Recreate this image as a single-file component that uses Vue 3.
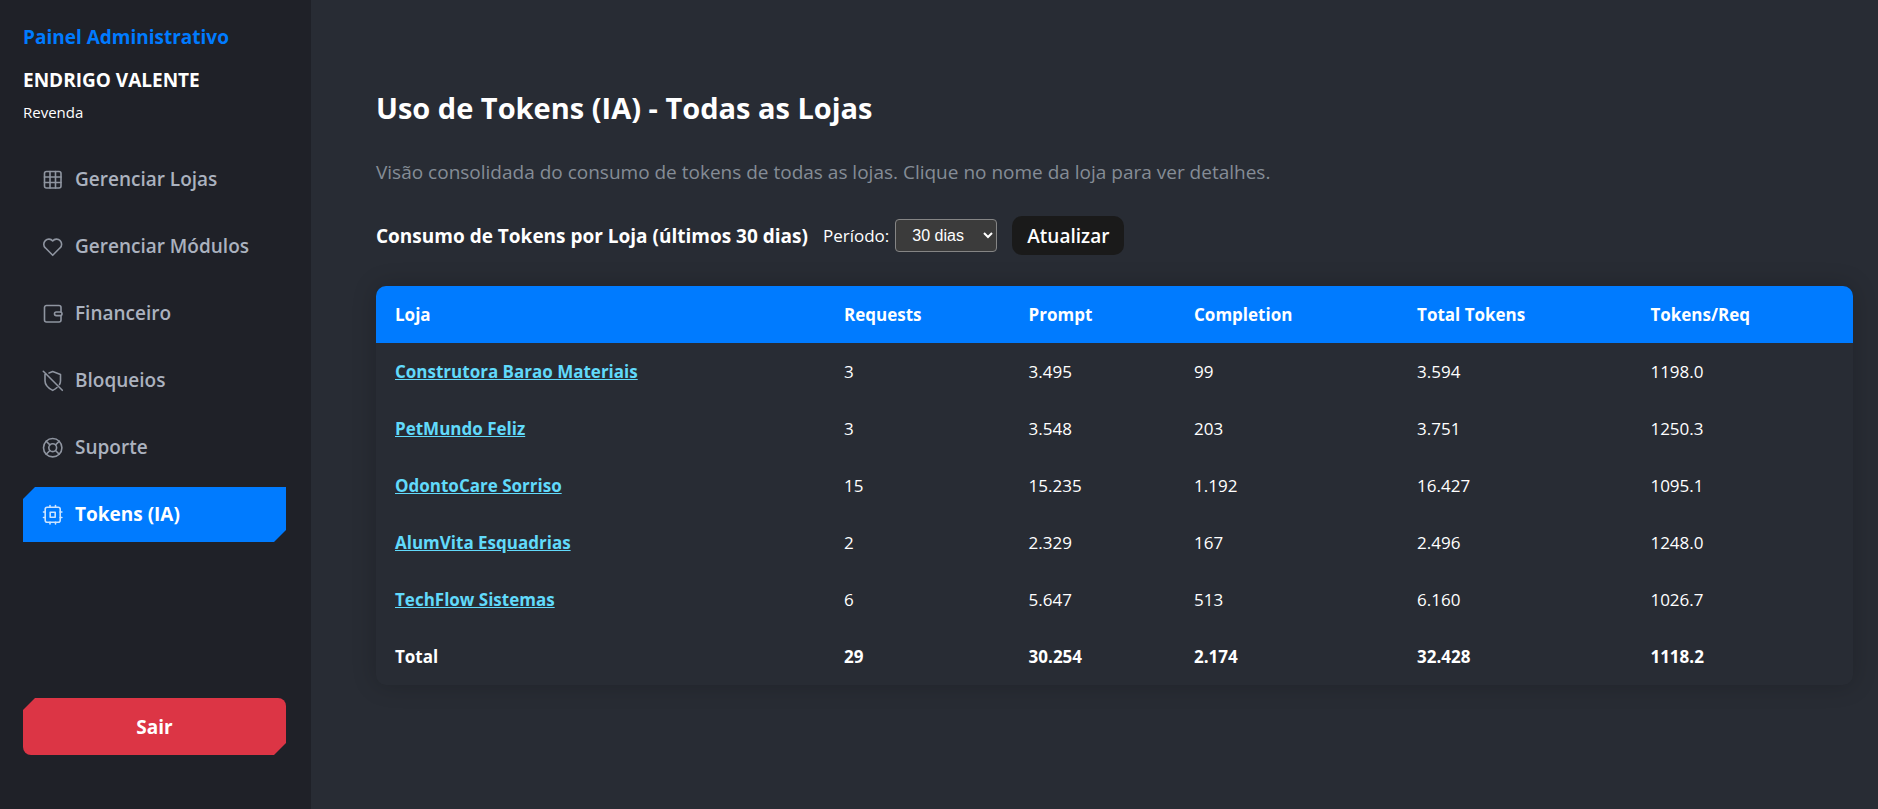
<script setup>
import { ref } from 'vue'

const period = ref('30')

const menu = [
  { label: 'Gerenciar Lojas', icon: 'grid' },
  { label: 'Gerenciar Módulos', icon: 'heart' },
  { label: 'Financeiro', icon: 'wallet' },
  { label: 'Bloqueios', icon: 'shield' },
  { label: 'Suporte', icon: 'buoy' },
  { label: 'Tokens (IA)', icon: 'chip', active: true }
]

const columns = ['Loja', 'Requests', 'Prompt', 'Completion', 'Total Tokens', 'Tokens/Req']

const stores = [
  { name: 'Construtora Barao Materiais', values: ['3', '3.495', '99', '3.594', '1198.0'] },
  { name: 'PetMundo Feliz', values: ['3', '3.548', '203', '3.751', '1250.3'] },
  { name: 'OdontoCare Sorriso', values: ['15', '15.235', '1.192', '16.427', '1095.1'] },
  { name: 'AlumVita Esquadrias', values: ['2', '2.329', '167', '2.496', '1248.0'] },
  { name: 'TechFlow Sistemas', values: ['6', '5.647', '513', '6.160', '1026.7'] }
]

const totals = ['29', '30.254', '2.174', '32.428', '1118.2']
</script>

<template>
  <div class="layout">
    <aside class="sidebar">
      <h2 class="brand">Painel Administrativo</h2>
      <div class="user">ENDRIGO VALENTE</div>
      <div class="role">Revenda</div>

      <nav class="menu">
        <a
          v-for="item in menu"
          :key="item.label"
          href="#"
          class="menu-item"
          :class="{ active: item.active }"
        >
          <svg class="icon" viewBox="0 0 24 24" aria-hidden="true">
            <template v-if="item.icon === 'grid'">
              <rect x="3.5" y="3.5" width="16.5" height="16.5" rx="2" />
              <path d="M3.5 9h16.5M3.5 14.5h16.5M9 3.5v16.5M14.5 3.5v16.5" />
            </template>
            <path
              v-else-if="item.icon === 'heart'"
              d="M11.7 20.3l-7.4-7.5a5 5 0 0 1 0-7.2a5 5 0 0 1 7.4.4a5 5 0 0 1 7.4-.4a5 5 0 0 1 0 7.2z"
            />
            <template v-else-if="item.icon === 'wallet'">
              <path d="M20 10V5.5a2 2 0 0 0-2-2H5.500a2 2 0 0 0-2 2V18a2 2 0 0 0 2 2H18a2 2 0 0 0 2-2v-4" />
              <rect x="13.500" y="10" width="7.500" height="3.600" rx="1.800" />
            </template>
            <template v-else-if="item.icon === 'shield'">
              <path d="M8 3.900l3.700-1.300l7.800 2.900v6.300c0 1.500-.4 2.700-1 3.700M16 18.500c-1.300 1.200-2.800 2.100-4.300 2.900c-4-2-7.700-5-7.700-9.600V5.500l.900-.3" />
              <path d="M2.300 2.300l19 19" />
            </template>
            <template v-else-if="item.icon === 'buoy'">
              <circle cx="11.700" cy="11.700" r="9.200" />
              <circle cx="11.700" cy="11.700" r="3.900" />
              <path d="M5.200 5.200l3.700 3.700M14.500 14.500l3.700 3.700M18.200 5.200l-3.700 3.700M8.900 14.500l-3.700 3.700" />
            </template>
            <template v-else>
              <rect x="4.200" y="4.200" width="15" height="15" rx="2" />
              <rect x="9.200" y="9.200" width="5" height="5" />
              <path d="M9 2.500v1.700M14.500 2.500v1.700M9 19.200v1.700M14.500 19.200v1.700M2.500 9h1.700M2.500 14.500h1.700M19.200 9h1.700M19.200 14.500h1.700" />
            </template>
          </svg>
          <span>{{ item.label }}</span>
        </a>
      </nav>

      <button type="button" class="logout">Sair</button>
    </aside>

    <main class="content">
      <h1 class="title">Uso de Tokens (IA) - Todas as Lojas</h1>
      <p class="subtitle">
        Visão consolidada do consumo de tokens de todas as lojas. Clique no nome da loja para ver detalhes.
      </p>

      <div class="toolbar">
        <h3 class="section">Consumo de Tokens por Loja (últimos 30 dias)</h3>
        <div class="period">
          <label for="period">Período:</label>
          <select id="period" v-model="period">
            <option value="7">7 dias</option>
            <option value="30">30 dias</option>
            <option value="90">90 dias</option>
          </select>
        </div>
        <button type="button" class="refresh">Atualizar</button>
      </div>

      <table class="usage">
        <colgroup>
          <col class="col-store" />
          <col class="col-requests" />
          <col class="col-prompt" />
          <col class="col-completion" />
          <col class="col-total" />
          <col class="col-ratio" />
        </colgroup>
        <thead>
          <tr>
            <th v-for="column in columns" :key="column" scope="col">{{ column }}</th>
          </tr>
        </thead>
        <tbody>
          <tr v-for="store in stores" :key="store.name">
            <td><a href="#" class="store">{{ store.name }}</a></td>
            <td v-for="(value, i) in store.values" :key="i">{{ value }}</td>
          </tr>
        </tbody>
        <tfoot>
          <tr>
            <td>Total</td>
            <td v-for="(value, i) in totals" :key="i">{{ value }}</td>
          </tr>
        </tfoot>
      </table>
    </main>
  </div>
</template>

<style>
body {
  margin: 0;
  background: #282c34;
}
</style>

<style scoped>
.layout {
  display: flex;
  min-height: 100vh;
  background: #282c34;
  color: #fff;
  font-family: "Segoe UI", "Open Sans", "Noto Sans", sans-serif;
  font-size: 17px;
  line-height: 23px;
}

.layout * {
  box-sizing: border-box;
}

.sidebar {
  display: flex;
  flex-direction: column;
  flex: 0 0 311px;
  padding: 24px 25px 54px 23px;
  background: #1f2128;
}

.brand,
.user {
  margin: 0 0 17px;
  font-size: 19px;
  font-weight: 700;
  line-height: 26px;
}

.brand {
  color: #007bff;
}

.user {
  margin-bottom: 9px;
}

.role {
  margin-bottom: 30px;
  font-size: 15px;
  line-height: 20px;
}

.menu {
  display: flex;
  flex-direction: column;
  gap: 12px;
}

.menu-item {
  display: flex;
  align-items: center;
  gap: 10px;
  height: 55px;
  padding: 0 18px;
  color: #abb2bf;
  font-size: 19px;
  font-weight: 600;
  text-decoration: none;
}

.menu-item.active {
  background: #007bff;
  color: #fff;
  font-weight: 700;
  clip-path: polygon(12px 0, 100% 0, 100% calc(100% - 12px), calc(100% - 12px) 100%, 0 100%, 0 12px);
}

.icon {
  flex: none;
  width: 24px;
  height: 24px;
  fill: none;
  stroke: currentColor;
  stroke-width: 1.6;
  stroke-linecap: round;
  stroke-linejoin: round;
  opacity: 0.8;
}

.logout {
  height: 57px;
  margin-top: auto;
  border: 0;
  border-radius: 8px;
  background: #dc3545;
  color: #fff;
  font-family: inherit;
  font-size: 19px;
  font-weight: 700;
  clip-path: polygon(12px 0, 100% 0, 100% calc(100% - 12px), calc(100% - 12px) 100%, 0 100%, 0 12px);
}

.content {
  flex: 1;
  min-width: 0;
  padding: 88px 25px 40px 65px;
}

.title {
  margin: 0 0 31px;
  font-size: 29px;
  font-weight: 700;
  line-height: 40px;
}

.subtitle {
  margin: 0 0 31px;
  color: #858c96;
  font-size: 19px;
  line-height: 26px;
}

.toolbar {
  display: flex;
  align-items: center;
  gap: 15px;
  margin-bottom: 31px;
}

.section {
  margin: 0;
  font-size: 19px;
  font-weight: 700;
  line-height: 26px;
}

.period {
  display: flex;
  align-items: center;
  gap: 6px;
}

.period select {
  min-width: 102px;
  height: 33px;
  padding: 0 12px;
  border: 1px solid #858585;
  border-radius: 4px;
  background-color: #3b3b3b;
  color: #fff;
  color-scheme: dark;
  font-family: "Liberation Sans", Arial, sans-serif;
  font-size: 16px;
}

.refresh {
  height: 39px;
  padding: 0 15px;
  border: 0;
  border-radius: 10px;
  background: #1a1a1a;
  color: #fff;
  font-family: inherit;
  font-size: 19px;
  font-weight: 600;
}

.usage {
  width: 100%;
  table-layout: fixed;
  border-spacing: 0;
  overflow: hidden;
  border-radius: 10px;
  background: #282c34;
  box-shadow: 0 0 24px rgba(0, 0, 0, 0.2);
}

.col-store {
  width: 30.4%;
}

.col-requests {
  width: 12.5%;
}

.col-prompt {
  width: 11.2%;
}

.col-completion {
  width: 15.1%;
}

.col-total {
  width: 15.8%;
}

.col-ratio {
  width: 15%;
}

.usage th,
.usage td {
  padding: 17px 19px;
  text-align: left;
}

.usage th {
  background: #007bff;
  font-weight: 700;
}

.usage tfoot td {
  font-weight: 700;
}

.store {
  color: #61dafb;
  font-weight: 700;
}
</style>
